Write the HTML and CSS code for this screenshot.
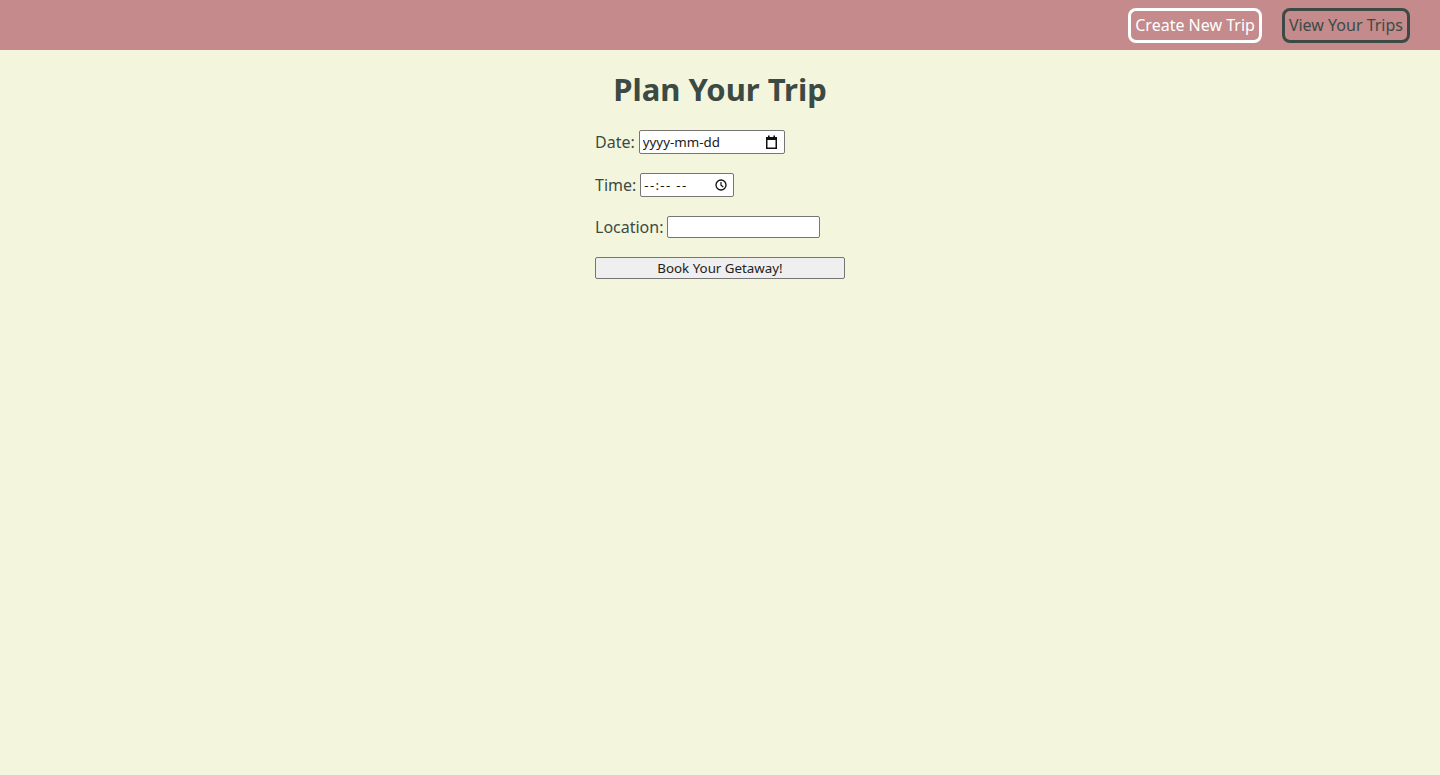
FILE: index.html
```html
<!DOCTYPE html>
<html lang="en">
<head>
<meta charset="utf-8">
<title>Plan Your Trip</title>
<link rel="stylesheet" href="styles.css">
</head>
<body>
<header class="topbar">
  <nav class="nav">
    <button class="nav-btn nav-btn-light" type="button">Create New Trip</button>
    <button class="nav-btn nav-btn-dark" type="button">View Your Trips</button>
  </nav>
</header>
<main class="main">
  <h1 class="title">Plan Your Trip</h1>
  <form class="trip-form">
    <div class="row">
      <label for="trip-date">Date:</label>
      <div class="field date-field">
        <input id="trip-date" class="field-input" type="text" placeholder="yyyy-mm-dd">
        <svg class="icon-cal" width="13" height="14" viewBox="0 0 13 14" aria-hidden="true">
          <rect x="1.75" y="2.75" width="9.5" height="10.5" fill="none" stroke="#111" stroke-width="1.5"/>
          <rect x="1" y="2" width="11" height="3" fill="#111"/>
          <rect x="3" y="0.5" width="1.6" height="2.5" fill="#111"/>
          <rect x="8.4" y="0.5" width="1.6" height="2.5" fill="#111"/>
        </svg>
      </div>
    </div>
    <div class="row">
      <label for="trip-time">Time:</label>
      <div class="field time-field">
        <input id="trip-time" class="field-input time-input" type="text" placeholder="--:-- --">
        <svg class="icon-clock" width="12" height="12" viewBox="0 0 12 12" aria-hidden="true">
          <circle cx="6" cy="6" r="5" fill="none" stroke="#111" stroke-width="1.3"/>
          <path d="M6 3 V6.2 L8.3 8" fill="none" stroke="#111" stroke-width="1.2"/>
        </svg>
      </div>
    </div>
    <div class="row">
      <label for="trip-loc">Location:</label>
      <input id="trip-loc" class="loc-input" type="text">
    </div>
    <button type="button" class="submit">Book Your Getaway!</button>
  </form>
</main>
</body>
</html>
```
FILE: styles.css
```css
html, body {
  margin: 0;
  padding: 0;
}
body {
  background: #f3f6dc;
  color: #3c4a45;
  font-family: "Noto Sans", "Open Sans", sans-serif;
  min-height: 775px;
}
.topbar {
  background: #c48a8c;
  height: 50px;
  display: flex;
  justify-content: flex-end;
  align-items: center;
}
.nav {
  display: flex;
  gap: 20px;
  padding-right: 30px;
}
.nav-btn {
  font-family: inherit;
  font-size: 16px;
  background: transparent;
  border-radius: 8px;
  padding: 0 4px;
  height: 35px;
  border: 3px solid;
  cursor: pointer;
}
.nav-btn-light {
  color: #ffffff;
  border-color: #ffffff;
}
.nav-btn-dark {
  color: #3c4a45;
  border-color: #3c4a45;
}
.main {
  display: flex;
  flex-direction: column;
  align-items: center;
}
.title {
  font-size: 31px;
  font-weight: bold;
  margin: 18px 0 20px;
}
.trip-form {
  width: 250px;
  display: flex;
  flex-direction: column;
  gap: 19px;
}
.row {
  display: flex;
  align-items: center;
  gap: 4px;
  font-size: 16px;
}
.field {
  display: flex;
  align-items: center;
  box-sizing: border-box;
  height: 24px;
  background: #ffffff;
  border: 1px solid #767676;
  border-radius: 2px;
  padding: 0 6px 0 3px;
}
.date-field { width: 146px; }
.time-field { width: 94px; }
.field-input {
  flex: 1;
  min-width: 0;
  border: none;
  outline: none;
  background: transparent;
  padding: 0;
  font-family: inherit;
  font-size: 13.33px;
  color: #1a1a1a;
}
.time-input {
  letter-spacing: 1.3px;
}
.field-input::placeholder {
  color: #1a1a1a;
  opacity: 1;
}
.icon-cal, .icon-clock {
  flex: none;
}
.loc-input {
  box-sizing: border-box;
  width: 153px;
  height: 22px;
  background: #ffffff;
  border: 1px solid #767676;
  border-radius: 2px;
  font-family: inherit;
  font-size: 13.33px;
}
.submit {
  width: 250px;
  height: 22px;
  padding: 0;
  background: #efefef;
  border: 1px solid #767676;
  border-radius: 2px;
  font-family: inherit;
  font-size: 13.33px;
  color: #222222;
}
```
